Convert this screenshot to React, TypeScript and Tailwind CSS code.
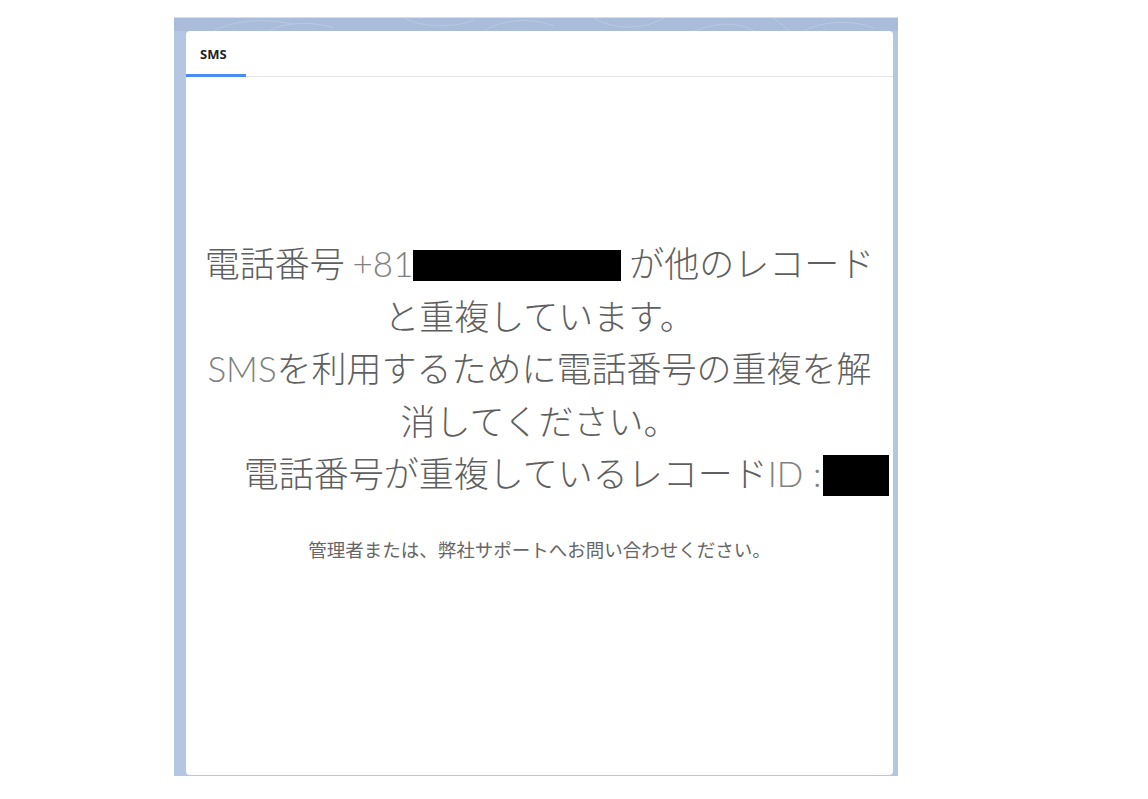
import React from "react";

const jp = { fontFamily: '"Noto Sans CJK JP", "Noto Sans", sans-serif' };

function Latin({ children }: { children: React.ReactNode }) {
    return <span className="font-light text-[#808080] [font-family:Lato,'Noto_Sans_CJK_JP',sans-serif]">{children}</span>;
}

function Redacted({ className }: { className: string }) {
    return <span className={`inline-block bg-black align-middle ${className}`} />;
}

export default function App() {
    return (
        <div className="w-[1148px] min-h-[799px] bg-white pt-[17px]" style={jp}>
            <div className="ml-[174px] flex h-[759px] w-[724px] flex-col border-t border-[#dedede] bg-[#b4c6e1]">
                {/* decorative header strip */}
                <div className="h-[13px] bg-[#a9bddb]">
                    <svg width="724" height="13" viewBox="0 0 724 13" fill="none" stroke="#b9c9e1" strokeWidth="1">
                        <path d="M40 13 C60 2, 90 0, 120 6" />
                        <path d="M95 13 C110 4, 140 3, 160 10" />
                        <path d="M230 0 C250 10, 280 10, 300 2" />
                        <path d="M310 13 C330 0, 360 0, 380 8" />
                        <path d="M420 0 C440 12, 470 12, 490 0" />
                        <path d="M520 13 C540 6, 560 2, 580 13" />
                        <path d="M600 0 L615 13" />
                        <path d="M630 13 C650 2, 680 2, 700 10" />
                    </svg>
                </div>
                <div className="ml-[12px] mr-[5px] flex flex-1 flex-col rounded-[4px] bg-white">
                    <div className="flex h-[46px] border-b border-[#e5e5e5]">
                        <div className="-mb-px w-[60px] border-b-[3px] border-[#4a8cf0] pl-[14px] pt-[14px] text-[13px] font-bold leading-[18px] text-[#1f1f1f] [font-family:'Noto_Sans',sans-serif]">
                            SMS
                        </div>
                    </div>
                    <div className="flex flex-col px-2 pt-[159px]">
                        <div className="text-center text-[35px] font-light leading-[52px] text-[#5f5f5f]">
                            <div>
                                電話番号 <Latin>+81</Latin>
                                <Redacted className="h-[31px] w-[208px] -mt-[4px]" /> が他のレコード
                            </div>
                            <div>と重複しています。</div>
                            <div>
                                <Latin>SMS</Latin>を利用するために電話番号の重複を解
                            </div>
                            <div>消してください。</div>
                            <div className="flex justify-center">
                                <div className="ml-[54px] whitespace-nowrap">
                                    電話番号が重複しているレコード<Latin>ID :</Latin>
                                    <Redacted className="h-[41px] w-[66px] -mt-[4px] ml-[2px]" />
                                </div>
                            </div>
                        </div>
                        <div className="mt-[40px] text-center text-[18.5px] leading-[20px] text-[#666666]">
                            管理者または、弊社サポートへお問い合わせください。
                        </div>
                    </div>
                </div>
                <div className="h-px" />
            </div>
        </div>
    );
}
